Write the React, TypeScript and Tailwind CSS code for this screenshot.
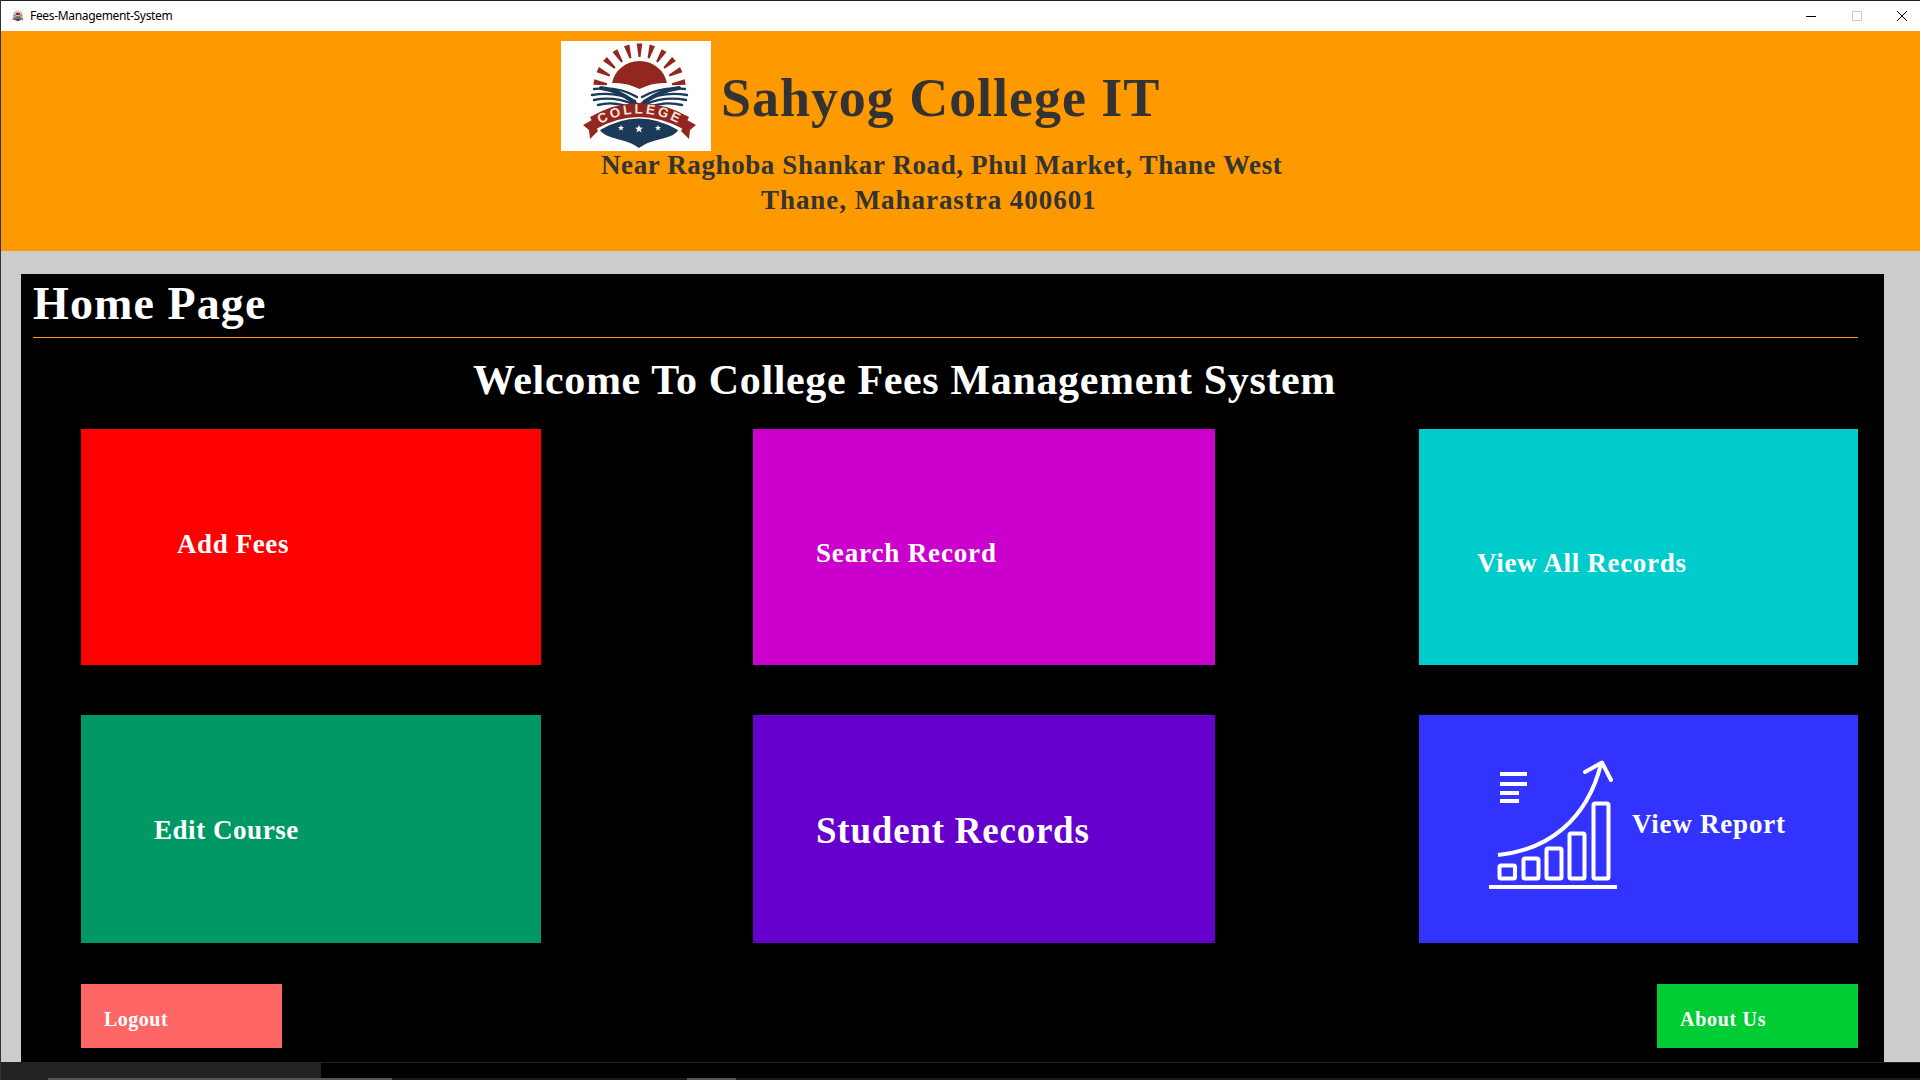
import React from "react";

const rays = Array.from({ length: 11 }, (_, i) => {
  const a = ((-80 + i * 16) * Math.PI) / 180;
  const p = (r: number, d: number) => `${(78.5 + r * Math.sin(a + d)).toFixed(1)},${(49 - r * Math.cos(a + d)).toFixed(1)}`;
  return `${p(33, -0.03)} ${p(46.5, -0.06)} ${p(46.5, 0.06)} ${p(33, 0.03)}`;
});

function Star({ x, y, r }: { x: number; y: number; r: number }) {
  const pts = Array.from({ length: 10 }, (_, i) => {
    const a = (i * 36 * Math.PI) / 180;
    const q = i % 2 ? r * 0.42 : r;
    return `${(x + q * Math.sin(a)).toFixed(1)},${(y - q * Math.cos(a)).toFixed(1)}`;
  }).join(" ");
  return <polygon points={pts} fill="#fff" />;
}

function Logo({ className, arcId }: { className: string; arcId: string }) {
  return (
    <svg viewBox="0 0 150 110" className={className}>
      <rect width="150" height="110" fill="#fff" />
      {rays.map((r, i) => (
        <polygon key={i} points={r} fill="#93261f" />
      ))}
      <path d="M51 42 A28 27 0 0 1 106 42 Q92 41 78.5 48 Q65 41 51 42Z" fill="#93261f" />
      <g fill="none" stroke="#1c3a57" strokeLinecap="round">
        <path d="M78 66 Q62 50 40 47 M78 66 Q95 50 118 47" strokeWidth="4" />
        <path d="M76 56 Q58 45 33 48 M81 56 Q100 45 124 48" strokeWidth="2.4" />
        <path d="M74 60 Q55 50 31 54 M83 60 Q102 50 126 54" strokeWidth="2.4" />
        <path d="M72 63 Q52 55 33 59 M85 63 Q104 55 125 59" strokeWidth="2.4" />
        <path d="M68 66 Q52 60 37 64 M89 66 Q104 60 121 64" strokeWidth="2.4" />
      </g>
      <path d="M22 84 L31 79 L37 90 L29 98 L28 89Z" fill="#93261f" />
      <path d="M135 84 L126 79 L120 90 L128 98 L129 89Z" fill="#93261f" />
      <path d="M29 76 Q78 48 128 76 L122 88 Q78 64 35 88Z" fill="#93261f" />
      <path id={arcId} d="M36 85 Q78 60 122 85" fill="none" />
      <text fill="#f3e6d8" fontFamily="Liberation Sans, sans-serif" fontSize="13.5" letterSpacing="2.6">
        <textPath href={`#${arcId}`} startOffset="50%" textAnchor="middle">COLLEGE</textPath>
      </text>
      <path d="M39 89 Q78 66 117 89 Q116 94 100 98 Q86 101 78 107 Q70 101 56 98 Q41 94 39 89Z" fill="#1c3a57" />
      <Star x={60} y={87} r={3.2} />
      <Star x={78} y={88} r={4.2} />
      <Star x={97} y={87} r={3.2} />
    </svg>
  );
}

function ChartIcon() {
  return (
    <svg viewBox="0 0 130 130" className="w-[130px] h-[130px] mb-[8px]" fill="none" stroke="#fff">
      <rect x="1" y="125" width="128" height="4" fill="#fff" stroke="none" />
      <g strokeWidth="4">
        <path d="M12 14H39M12 24H39M12 33H31M12 41H31" />
        <rect x="11.5" y="105.5" width="15.5" height="13" rx="1.5" />
        <rect x="35.5" y="98.5" width="15" height="20" rx="1.5" />
        <rect x="58.5" y="88.5" width="15" height="30" rx="1.5" />
        <rect x="81.5" y="73.5" width="15" height="45" rx="1.5" />
        <rect x="105.5" y="43.5" width="15" height="75" rx="1.5" />
        <path d="M10 95 C60 90 99 60 113 4" />
        <path d="M97 12 L114 2.5 L123 20" strokeLinecap="round" strokeLinejoin="round" />
      </g>
    </svg>
  );
}

const serif = "font-['Liberation_Serif',serif] font-bold";

function Tile({ color, className, children }: { color: string; className: string; children: React.ReactNode }) {
  return <div className={`flex items-center text-white ${serif} ${color} ${className}`}>{children}</div>;
}

export default function App() {
  return (
    <div className="w-[1920px] h-[1080px] overflow-hidden flex flex-col bg-[#cccccc] border-l border-l-[#333333]">
      <div className="h-[31px] shrink-0 bg-white border-t border-t-[#222222] flex items-center pl-[9px] font-['Noto_Sans',sans-serif] text-[12px] tracking-[-0.33px] text-black">
        <Logo className="w-[15px] h-[12px] mr-[5px]" arcId="arcSmall" />
        <span>Fees-Management-System</span>
        <div className="ml-auto flex items-center">
          <svg width="12" height="12" viewBox="0 0 12 12" className="mr-[34px]" stroke="#000"><path d="M1 6.5H11" /></svg>
          <svg width="12" height="12" viewBox="0 0 12 12" className="mr-[33px]" stroke="#cccccc" fill="none"><rect x="1.5" y="1.5" width="9" height="9" /></svg>
          <svg width="12" height="12" viewBox="0 0 12 12" className="mr-[12px]" stroke="#000"><path d="M1 1L11 11M11 1L1 11" /></svg>
        </div>
      </div>

      <header className={`h-[220px] shrink-0 bg-[#ff9900] pl-[560px] pt-[10px] text-[#333333] ${serif}`}>
        <div className="flex items-center h-[110px]">
          <Logo className="w-[150px] h-[110px]" arcId="arcLarge" />
          <h1 className="ml-[10px] mt-[4px] text-[54px] leading-[60px] tracking-[0.95px]">Sahyog College IT</h1>
        </div>
        <p className="text-[27px] leading-[35px] mt-[-3px] ml-[40px] tracking-[0.6px]">Near Raghoba Shankar Road, Phul Market, Thane West</p>
        <p className="text-[27px] leading-[35px] ml-[200px] tracking-[0.95px]">Thane, Maharastra 400601</p>
      </header>

      <main className={`ml-[20px] mt-[23px] w-[1863px] h-[788px] shrink-0 bg-black text-white ${serif}`}>
        <h2 className="ml-[12px] pt-[9px] text-[46px] leading-[42px] tracking-[1.1px]">Home Page</h2>
        <div className="ml-[12px] mr-[26px] mt-[12px] h-px bg-[#ff9900]" />
        <p className="ml-[452px] mt-[20px] text-[42px] leading-[44px] tracking-[0.65px]">Welcome To College Fees Management System</p>

        <div className="ml-[60px] mt-[27px] flex">
          <Tile color="bg-[#ff0000]" className="w-[460px] h-[236px] pl-[96px] pb-[6px] text-[27px] tracking-[0.6px]">Add Fees</Tile>
          <Tile color="bg-[#cc00cc]" className="ml-[212px] w-[462px] h-[236px] pl-[63px] pt-[12px] text-[27px] tracking-[0.85px]">Search Record</Tile>
          <Tile color="bg-[#00cccc]" className="ml-[204px] w-[439px] h-[236px] pl-[58px] pt-[32px] text-[27px] tracking-[0.7px]">View All Records</Tile>
        </div>

        <div className="ml-[60px] mt-[50px] flex">
          <Tile color="bg-[#009966]" className="w-[460px] h-[228px] pl-[73px] pt-[2px] text-[27px] tracking-[0.55px]">Edit Course</Tile>
          <Tile color="bg-[#6600cc]" className="ml-[212px] w-[462px] h-[228px] pl-[63px] pt-[4px] text-[37px] tracking-[0.77px]">Student Records</Tile>
          <Tile color="bg-[#3333ff]" className="ml-[204px] w-[439px] h-[228px] pl-[69px] text-[27px] tracking-[0.77px]">
            <ChartIcon />
            <span className="ml-[14px] mb-[10px]">View Report</span>
          </Tile>
        </div>

        <div className="ml-[60px] mr-[26px] mt-[41px] flex justify-between">
          <Tile color="bg-[#ff6666]" className="w-[201px] h-[64px] pl-[23px] pt-[6px] text-[20px] tracking-[0.5px]">Logout</Tile>
          <Tile color="bg-[#00cc33]" className="w-[201px] h-[64px] pl-[23px] pt-[6px] text-[20px] tracking-[0.7px]">About Us</Tile>
        </div>
      </main>

      <footer className="flex-1 bg-black border-t border-t-[#222222] flex flex-col">
        <div className="flex-1 w-[320px] bg-[#222222]" />
        <div className="h-[2px] flex bg-[#1a1a1a]">
          <div className="w-[47px] bg-[#222222]" />
          <div className="w-[344px] bg-[#555555]" />
          <div className="ml-[295px] w-[49px] bg-[#555555]" />
        </div>
      </footer>
    </div>
  );
}
